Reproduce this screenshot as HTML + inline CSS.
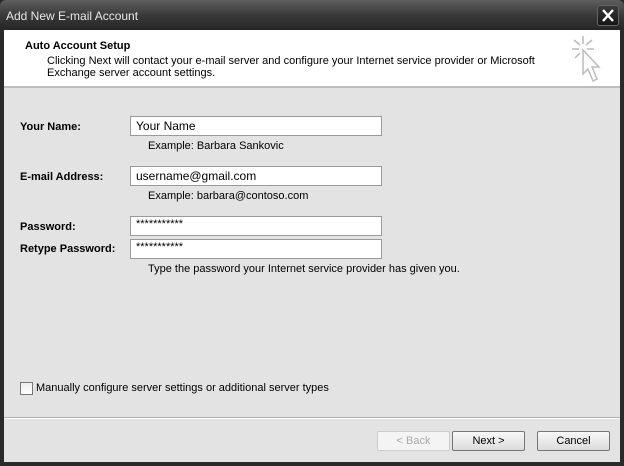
<!DOCTYPE html>
<html><head><style>
*{margin:0;padding:0;box-sizing:border-box}
body{width:624px;height:466px;background:#2a2a2a;font-family:"Liberation Sans",sans-serif;font-size:11px;color:#000;position:relative;overflow:hidden}
.title{position:absolute;left:0;top:0;width:624px;height:30px;background:linear-gradient(#5e5e5e,#3a3a3a 50%,#262626);color:#e8e8e8;font-size:12px;padding:9px 0 0 6px;border-radius:6px 6px 0 0}
.close{position:absolute;left:597px;top:5px;width:22px;height:21px;border:1px solid #666;border-radius:3px;background:linear-gradient(#3a3a3a,#151515)}
.win{position:absolute;left:4px;top:30px;width:616px;height:432px;background:#e3e3e3}
.head{position:absolute;left:0;top:0;width:616px;height:58px;background:#fff;border-bottom:2px solid #bdbdbd}
.abs{position:absolute;white-space:nowrap}
.b{font-weight:bold}
.in{position:absolute;left:126px;width:252px;height:20px;background:#fff;border:1px solid #9a9a9a;font-size:12px;padding:2px 0 0 5px}
.sep{position:absolute;left:0;top:387px;width:616px;height:2px;border-top:1px solid #b0b0b0;background:#fff}
.btn{position:absolute;top:401px;width:73px;height:20px;border:1px solid #777;border-radius:2px;background:linear-gradient(#f8f8f8,#dcdcdc);text-align:center;font-size:11px;line-height:18px}
</style></head><body>
<div class="title">Add New E-mail Account</div>
<div class="close"><svg width="20" height="19" viewBox="0 0 20 19"><path d="M5 4L15 15M15 4L5 15" stroke="#fff" stroke-width="2.4"/></svg></div>
<div class="win">
<div class="head">
<div class="abs b" style="left:21px;top:10px;font-size:11px">Auto Account Setup</div>
<div class="abs" style="left:43px;top:25px">Clicking Next will contact your e-mail server and configure your Internet service provider or Microsoft</div>
<div class="abs" style="left:43px;top:37px">Exchange server account settings.</div>
<svg class="abs" style="left:566px;top:4px" width="40" height="52" viewBox="0 0 40 52"><g stroke="#bbb" stroke-width="1.5" fill="none"><path d="M13 2V10M4 6L10 11M22 6L16 11M2 15H9M24 15H17M5 24L10 19"/><path d="M13 16L13 40L18 35L23 47L27 45L22 33L29 33Z" fill="#fff"/></g></svg>
</div>
<div class="abs b" style="left:16px;top:91px">Your Name:</div>
<div class="in" style="top:86px">Your Name</div>
<div class="abs" style="left:144px;top:110px">Example: Barbara Sankovic</div>
<div class="abs b" style="left:16px;top:141px">E-mail Address:</div>
<div class="in" style="top:136px">username@gmail.com</div>
<div class="abs" style="left:144px;top:160px">Example: barbara@contoso.com</div>
<div class="abs b" style="left:16px;top:191px">Password:</div>
<div class="in" style="top:186px;font-size:11px;padding-top:1px">***********</div>
<div class="abs b" style="left:16px;top:213px">Retype Password:</div>
<div class="in" style="top:209px;font-size:11px;padding-top:1px">***********</div>
<div class="abs" style="left:144px;top:233px">Type the password your Internet service provider has given you.</div>
<div class="abs" style="left:16px;top:352px;width:13px;height:13px;border:1px solid #777;background:linear-gradient(#eee,#fff)"></div>
<div class="abs" style="left:32px;top:352px">Manually configure server settings or additional server types</div>
<div class="sep"></div>
<div class="btn" style="left:373px;color:#aaa;border-color:#ccc;background:#f4f4f4">&lt; Back</div>
<div class="btn" style="left:448px">Next &gt;</div>
<div class="btn" style="left:533px">Cancel</div>
</div>
</body></html>
